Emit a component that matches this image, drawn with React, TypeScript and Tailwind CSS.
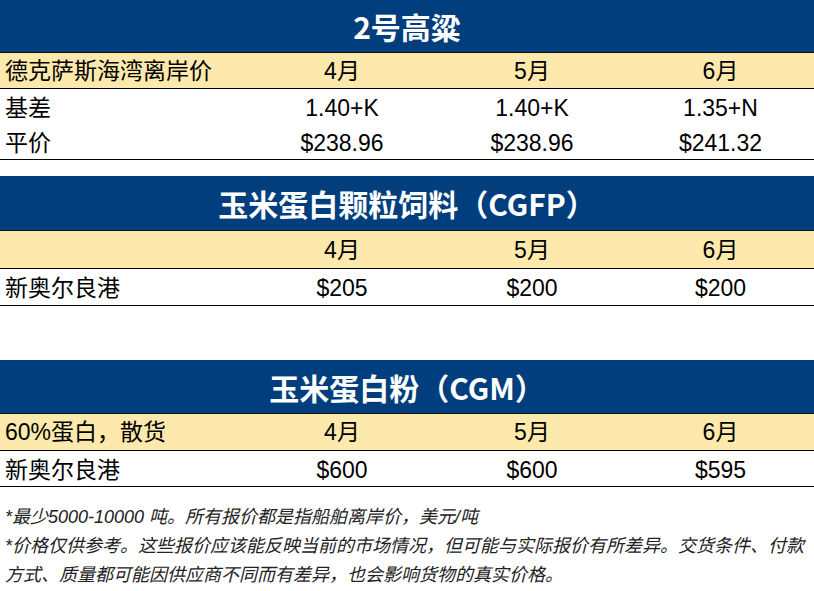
const FONT = { fontFamily: '"Liberation Sans", Arial, "Noto Sans CJK SC", sans-serif' };
const TITLE_FONT = { fontFamily: '"Noto Sans CJK SC", "Liberation Sans", sans-serif' };

type Row = { label: string; values: string[] };

type Section = {
  title: string;
  bandH: string;
  head: string;
  headH: string;
  rows: Row[];
  rowH: string[];
};

const sections: Section[] = [
  {
    title: "2号高粱",
    bandH: "h-[53px]",
    head: "德克萨斯海湾离岸价",
    headH: "h-[36px]",
    rows: [
      { label: "基差", values: ["1.40+K", "1.40+K", "1.35+N"] },
      { label: "平价", values: ["$238.96", "$238.96", "$241.32"] },
    ],
    rowH: ["h-[35px]", "h-[36px]"],
  },
  {
    title: "玉米蛋白颗粒饲料（CGFP）",
    bandH: "h-[55px]",
    head: "",
    headH: "h-[38px]",
    rows: [{ label: "新奥尔良港", values: ["$205", "$200", "$200"] }],
    rowH: ["h-[37px]"],
  },
  {
    title: "玉米蛋白粉（CGM）",
    bandH: "h-[54px]",
    head: "60%蛋白，散货",
    headH: "h-[37px]",
    rows: [{ label: "新奥尔良港", values: ["$600", "$600", "$595"] }],
    rowH: ["h-[36px]"],
  },
];

const months = ["4月", "5月", "6月"];

function Table({ s }: { s: Section }) {
  return (
    <div>
      <div
        className={`${s.bandH} bg-[#003e7e] border-b border-[#111] flex items-center justify-center text-white font-bold text-[30px] leading-none`}
        style={TITLE_FONT}
      >
        {s.title}
      </div>
      <div
        className={`${s.headH} bg-[#fde9ac] border-b border-black grid grid-cols-[247px_190px_190px_1fr] items-center pt-[1px] text-[23px]`}
      >
        <div className="pl-[5px]">{s.head}</div>
        {months.map((m) => (
          <div key={m} className="text-center">
            {m}
          </div>
        ))}
      </div>
      {s.rows.map((r, i) => (
        <div
          key={r.label}
          className={`${s.rowH[i]} grid grid-cols-[247px_190px_190px_1fr] items-center pt-[2px] text-[23px] ${
            i === s.rows.length - 1 ? "border-b border-black" : ""
          }`}
        >
          <div className="pl-[5px]">{r.label}</div>
          {r.values.map((v, j) => (
            <div key={j} className="text-center">
              {v}
            </div>
          ))}
        </div>
      ))}
    </div>
  );
}

export default function App() {
  return (
    <div className="w-[814px] h-[591px] bg-white text-black overflow-hidden" style={FONT}>
      <Table s={sections[0]} />
      <div className="h-[16px]" />
      <Table s={sections[1]} />
      <div className="h-[54px]" />
      <Table s={sections[2]} />
      <div className="pt-[16px] pl-[5px] text-[18px] leading-[29px] italic text-[#222]">
        <div className="whitespace-nowrap">*最少5000-10000 吨。所有报价都是指船舶离岸价，美元/吨</div>
        <div className="whitespace-nowrap">
          *价格仅供参考。这些报价应该能反映当前的市场情况，但可能与实际报价有所差异。交货条件、付款
        </div>
        <div className="whitespace-nowrap">方式、质量都可能因供应商不同而有差异，也会影响货物的真实价格。</div>
      </div>
    </div>
  );
}
